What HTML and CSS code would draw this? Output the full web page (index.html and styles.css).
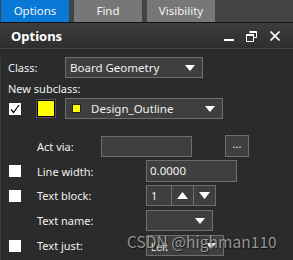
FILE: index.html
```html
<!DOCTYPE html>
<html lang="en">
<head>
  <meta charset="UTF-8" />
  <title>Options</title>
  <link rel="stylesheet" href="styles.css">
</head>
<body>
  <div class="tabs">
    <div class="tab active">Options</div>
    <div class="tab">Find</div>
    <div class="tab">Visibility</div>
  </div>

  <div class="header">
    <span class="title">Options</span>
    <div class="win-btns">
      <svg class="wb-min" width="10" height="12" viewBox="0 0 10 12"><rect x="0" y="9" width="10" height="2" fill="#fff"/></svg>
      <svg class="wb-max" width="11" height="11" viewBox="0 0 11 11"><path d="M3.5 0.5h7v6h-2.5M0.5 3.5h7v7h-7z" fill="none" stroke="#fff" stroke-width="1"/><rect x="0.5" y="3.5" width="7" height="1.5" fill="#fff"/><rect x="3.5" y="0.5" width="7" height="1.5" fill="#fff"/></svg>
      <svg class="wb-close" width="10" height="10" viewBox="0 0 10 10"><path d="M0.5 0.5l9 9M9.5 0.5l-9 9" stroke="#fff" stroke-width="1.6"/></svg>
    </div>
  </div>

  <div class="panel">
    <div class="row row-class">
      <span class="label lbl-class">Class:</span>
      <div class="select sel-class">
        <span>Board Geometry</span>
        <svg class="arrow" width="10" height="6" viewBox="0 0 10 6"><polygon points="0,0 10,0 5,6" fill="#fff"/></svg>
      </div>
    </div>

    <div class="row row-newsub">
      <span class="label">New subclass:</span>
    </div>

    <div class="row row-sub">
      <span class="check-cell"><span class="checkbox checked"><svg width="12" height="12" viewBox="0 0 12 12"><path d="M2 6.5l2.5 3L10 2" fill="none" stroke="#000" stroke-width="1.2"/></svg></span></span>
      <span class="swatch-cell"><span class="swatch"></span></span>
      <div class="select sel-sub">
        <span class="mini-swatch"></span>
        <span>Design_Outline</span>
        <svg class="arrow" width="10" height="6" viewBox="0 0 10 6"><polygon points="0,0 10,0 5,6" fill="#fff"/></svg>
      </div>
    </div>

    <div class="row row-act">
      <span class="check-cell"></span>
      <span class="label lbl-act">Act via:</span>
      <div class="input inp-act"></div>
      <div class="btn-dots">...</div>
    </div>

    <div class="row row-lw">
      <span class="check-cell"><span class="checkbox"></span></span>
      <span class="label lbl-wide">Line width:</span>
      <div class="input inp-lw">0.0000</div>
    </div>

    <div class="row row-tb">
      <span class="check-cell"><span class="checkbox"></span></span>
      <span class="label lbl-wide">Text block:</span>
      <div class="spin">
        <span class="spin-val">1</span>
        <span class="spin-btn"><svg width="11" height="7" viewBox="0 0 11 7"><polygon points="0,7 11,7 5.5,0" fill="#fff"/></svg></span>
        <span class="spin-btn"><svg width="11" height="7" viewBox="0 0 11 7"><polygon points="0,0 11,0 5.5,7" fill="#fff"/></svg></span>
      </div>
    </div>

    <div class="row row-tn">
      <span class="check-cell"></span>
      <span class="label lbl-wide">Text name:</span>
      <div class="select sel-tn">
        <span></span>
        <svg class="arrow" width="10" height="6" viewBox="0 0 10 6"><polygon points="0,0 10,0 5,6" fill="#fff"/></svg>
      </div>
    </div>

    <div class="row row-tj">
      <span class="check-cell"><span class="checkbox"></span></span>
      <span class="label lbl-wide">Text just:</span>
      <div class="select sel-tj">
        <span class="small">Left</span>
        <svg class="arrow" width="10" height="6" viewBox="0 0 10 6"><polygon points="0,0 10,0 5,6" fill="#fff"/></svg>
      </div>
    </div>
  </div>

  <!-- watermark -->
  <div class="watermark">CSDN @highman110</div>
</body>
</html>
```

FILE: styles.css
```css
* {
  box-sizing: border-box;
}

body {
  margin: 0;
  width: 293px;
  height: 260px;
  overflow: hidden;
  position: relative;
  background-color: #2b2b2b;
  color: #f0f0f0;
  font-family: "Noto Sans", "Liberation Sans", sans-serif;
  font-size: 11px;
}

.tabs {
  display: flex;
  gap: 4px;
  height: 23px;
  padding-left: 1px;
  background-color: #434343;
  border-bottom: 1px solid #141414;
}

.tab {
  width: 68px;
  height: 22px;
  line-height: 22px;
  text-align: center;
  background-color: #777777;
  color: #f4f4f4;
  font-size: 11.5px;
}

.tab + .tab {
  margin-left: 1px;
}

.tab.active {
  background-color: #0a78d7;
  margin-left: 0;
}

.header {
  display: flex;
  align-items: center;
  justify-content: space-between;
  height: 26px;
  padding: 0 13px 0 11px;
  background: linear-gradient(#3c3c3c, #2e2e2e);
  border-bottom: 1px solid #444444;
}

.title {
  font-weight: bold;
  font-size: 13px;
  color: #ffffff;
}

.win-btns {
  display: flex;
  align-items: center;
  margin-top: 1px;
}

.wb-max { margin-left: 12px; }
.wb-close { margin-left: 13px; }

.panel {
  border-left: 1px solid #3a3a3a;
  padding-left: 7px;
  height: 211px;
}

.row {
  display: flex;
  align-items: center;
  height: 21px;
}

.row-class { margin-top: 8px; }
.row-newsub { height: 20px; padding-top: 1px; }
.row-act { margin-top: 16px; height: 22px; }
.row-lw { margin-top: 3px; height: 22px; }
.row-tb { margin-top: 3px; }
.row-tn { margin-top: 4px; }
.row-tj { margin-top: 4px; }

.label {
  white-space: nowrap;
}

.lbl-class { width: 57px; }
.lbl-act { width: 64px; }
.lbl-wide { width: 109px; }

.check-cell {
  width: 29px;
  display: flex;
  align-items: center;
  padding-left: 1px;
}

.checkbox {
  width: 12px;
  height: 12px;
  background-color: #ffffff;
  display: block;
}

.checkbox svg {
  display: block;
}

.swatch-cell {
  width: 28px;
  display: flex;
}

.swatch {
  width: 18px;
  height: 17px;
  background-color: #ffff00;
  border: 1px solid #000;
  outline: 1px solid #555;
}

.select,
.input,
.spin,
.btn-dots {
  height: 21px;
  background-color: #3f3f3f;
  border: 1px solid #6e6e6e;
}

.select {
  display: flex;
  align-items: center;
  justify-content: space-between;
  padding: 0 7px 0 4px;
  font-size: 11.5px;
}

.select .arrow {
  display: block;
}

.sel-class { width: 138px; }
.sel-sub { width: 158px; justify-content: flex-start; padding-left: 6px; }
.sel-sub .arrow { margin-left: auto; }
.sel-tn { width: 67px; }
.sel-tj { width: 78px; }

.mini-swatch {
  width: 9px;
  height: 9px;
  background-color: #ffff00;
  border: 1px solid #222;
  margin-right: 10px;
}

.small {
  font-size: 10px;
  font-family: "Liberation Sans", sans-serif;
  padding-top: 4px;
}

.input {
  padding-left: 3px;
  line-height: 20px;
  color: #f2f2f2;
  font-size: 11.5px;
}

.inp-act { width: 91px; }
.inp-lw { width: 91px; height: 22px; }

.btn-dots {
  width: 24px;
  height: 22px;
  margin-left: 33px;
  text-align: center;
  line-height: 16px;
}

.spin {
  display: flex;
  width: 70px;
}

.spin-val {
  width: 25px;
  padding-left: 4px;
  line-height: 19px;
  border-right: 1px solid #6e6e6e;
}

.spin-btn {
  width: 22px;
  display: flex;
  align-items: center;
  justify-content: center;
}

.spin-btn + .spin-btn {
  border-left: 1px solid #6e6e6e;
}

.watermark {
  position: absolute;
  left: 127px;
  top: 230px;
  font-family: "Noto Sans CJK SC", "Liberation Sans", sans-serif;
  font-size: 15.6px;
  color: rgba(170, 170, 170, 0.85);
  text-shadow: 1px 1px 1px rgba(0, 0, 0, 0.6);
  white-space: nowrap;
}
```
